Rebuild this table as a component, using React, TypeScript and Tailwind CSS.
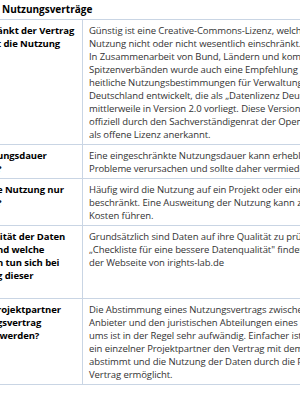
import React from "react";

type Row = {
  question: string[];
  answer: string[];
};

const rows: Row[] = [
  {
    question: ["änkt der Vertrag", "t die Nutzung"],
    answer: [
      "Günstig ist eine Creative-Commons-Lizenz, welche die",
      "Nutzung nicht oder nicht wesentlich einschränkt. Die",
      "In Zusammenarbeit von Bund, Ländern und kommunalen",
      "Spitzenverbänden wurde auch eine Empfehlung für ein-",
      "heitliche Nutzungsbestimmungen für Verwaltungsdaten in",
      "Deutschland entwickelt, die als „Datenlizenz Deutschland“",
      "mittlerweile in Version 2.0 vorliegt. Diese Version wurde",
      "offiziell durch den Sachverständigenrat der Open Definition",
      "als offene Lizenz anerkannt.",
    ],
  },
  {
    question: ["ungsdauer", "?"],
    answer: [
      "Eine eingeschränkte Nutzungsdauer kann erheblich",
      "Probleme verursachen und sollte daher vermieden werden.",
    ],
  },
  {
    question: ["e Nutzung nur", "?"],
    answer: [
      "Häufig wird die Nutzung auf ein Projekt oder einen Zweck",
      "beschränkt. Eine Ausweitung der Nutzung kann zu weiteren",
      "Kosten führen.",
    ],
  },
  {
    question: ["lität der Daten", "nd welche", "n tun sich bei", "g dieser", ""],
    answer: [
      "Grundsätzlich sind Daten auf ihre Qualität zu prüfen. Die",
      "„Checkliste für eine bessere Datenqualität\" findet sich auf",
      "der Webseite von irights-lab.de",
    ],
  },
  {
    question: ["rojektpartner", "gsvertrag", " werden?"],
    answer: [
      "Die Abstimmung eines Nutzungsvertrags zwischen dem",
      "Anbieter und den juristischen Abteilungen eines Konsorti-",
      "ums ist in der Regel sehr aufwändig. Einfacher ist es, wenn",
      "ein einzelner Projektpartner den Vertrag mit dem Anbieter",
      "abstimmt und die Nutzung der Daten durch die Partner im",
      "Vertrag ermöglicht.",
    ],
  },
];

export default function App() {
  return (
    <div className="h-[400px] w-[300px] overflow-hidden bg-white font-['Open_Sans',sans-serif] text-[9.5px] leading-[13px] tracking-[-0.08px]">
      {/* Kopfzeile */}
      <div className="flex h-[20px] items-center border-b border-[#c9d5e4] pl-[2px]">
        <p className="whitespace-nowrap text-[10px] font-bold tracking-normal text-black">Nutzungsverträge</p>
      </div>

      {rows.map((row, i) => (
        <div key={i} className="flex border-b border-[#c9d5e4]">
          <div className="w-[83px] shrink-0 overflow-hidden border-r border-[#c9d5e4] pt-[4px] pb-[3px] font-bold text-black">
            <div className="-ml-[3px]">
              {row.question.map((line, j) => (
                <p key={j} className="h-[13px] whitespace-pre">
                  {line}
                </p>
              ))}
            </div>
          </div>
          <div className="min-w-0 flex-1 overflow-hidden pt-[4px] pb-[3px] pl-[6px] text-[#333333]">
            {row.answer.map((line, j) => (
              <p key={j} className="whitespace-nowrap">
                {line}
              </p>
            ))}
          </div>
        </div>
      ))}
    </div>
  );
}
